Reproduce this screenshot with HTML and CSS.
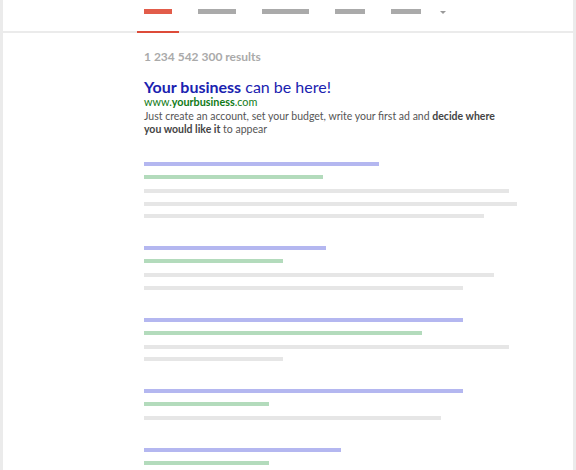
FILE: index.html
```html
<!DOCTYPE html>
<html lang="en">
<head>
  <meta charset="UTF-8" />
  <title>Search ads</title>
  <link rel="stylesheet" href="styles.css">
</head>
<body>
  <div class="frame">
    <nav class="tabs">
      <div class="tab active"><span class="tab-bar" style="width:28px"></span></div>
      <div class="tab"><span class="tab-bar" style="width:38px"></span></div>
      <div class="tab"><span class="tab-bar" style="width:47px"></span></div>
      <div class="tab"><span class="tab-bar" style="width:30px"></span></div>
      <div class="tab"><span class="tab-bar" style="width:30px"></span></div>
      <div class="tab more"><span class="caret"></span></div>
    </nav>

    <main class="results">
      <p class="count">1 234 542 300 results</p>

      <div class="ad">
        <h2><b>Your business</b> can be here!</h2>
        <div class="url">www.<b>yourbusiness</b>.com</div>
        <p class="desc">Just create an account, set your budget, write your first ad and <b>decide where you would like it</b> to appear</p>
      </div>

      <div class="result">
        <div class="bar title" style="width:235px"></div>
        <div class="bar link" style="width:179px"></div>
        <div class="bar text" style="width:365px"></div>
        <div class="bar text" style="width:373px"></div>
        <div class="bar text" style="width:340px"></div>
      </div>
      <div class="result">
        <div class="bar title" style="width:182px"></div>
        <div class="bar link" style="width:139px"></div>
        <div class="bar text" style="width:350px"></div>
        <div class="bar text" style="width:319px"></div>
      </div>
      <div class="result">
        <div class="bar title" style="width:319px"></div>
        <div class="bar link" style="width:278px"></div>
        <div class="bar text" style="width:365px"></div>
        <div class="bar text" style="width:139px"></div>
      </div>
      <div class="result">
        <div class="bar title" style="width:319px"></div>
        <div class="bar link" style="width:125px"></div>
        <div class="bar text" style="width:297px"></div>
      </div>
      <div class="result">
        <div class="bar title" style="width:197px"></div>
        <div class="bar link" style="width:125px"></div>
      </div>
    </main>
  </div>
</body>
</html>
```

FILE: styles.css
```css
:root {
  --line: #ebebeb;
  --red: #dd4b39;
  --muted: #aaa;
  --ad-blue: #1a22b0;
  --ad-green: #0f7a16;
}
* { box-sizing: border-box; margin: 0; padding: 0; }
body {
  font-family: Lato, 'Open Sans', sans-serif;
  background: #fff;
  color: #555;
  overflow: hidden;
}
.frame {
  height: 470px;
  border-left: 3px solid var(--line);
  border-right: 3px solid var(--line);
  overflow: hidden;
}

/* top tabs */
.tabs {
  display: flex;
  gap: 12px;
  height: 33px;
  padding-left: 134px;
  border-bottom: 2px solid var(--line);
}
.tab {
  padding: 9px 7px 0;
  height: 33px;
  border-bottom: 2px solid transparent;
}
.tab.active {
  border-bottom-color: var(--red);
}
.tab-bar {
  display: block;
  height: 5px;
  background: var(--muted);
}
.tab.active .tab-bar {
  background: #e25c4a;
}
.tab.more {
  padding-top: 11px;
  padding-left: 0;
}
.caret {
  display: block;
  width: 0;
  height: 0;
  border-left: 3px solid transparent;
  border-right: 3px solid transparent;
  border-top: 3px solid #999;
}

/* results */
.results {
  padding: 16px 0 0 141px;
}
.count {
  font-size: 12px;
  line-height: 15px;
  font-weight: 700;
  color: var(--muted);
}
.ad {
  margin-top: 14px;
}
.ad h2 {
  font-size: 16px;
  line-height: 17px;
  font-weight: 400;
  color: var(--ad-blue);
}
.ad h2 b {
  font-weight: 700;
}
.url {
  font-size: 10.8px;
  line-height: 13px;
  color: var(--ad-green);
}
.desc {
  margin-top: 2px;
  width: 360px;
  font-size: 10.5px;
  line-height: 13px;
  color: #555;
}
.desc b {
  color: #444;
}

.result {
  margin-top: 26px;
}
.result + .result {
  margin-top: 28px;
}
.bar {
  height: 4px;
}
.bar.title { background: #b4b7f0; }
.bar.link {
  margin-top: 9px;
  background: #b3dbbc;
}
.bar.text {
  margin-top: 8.5px;
  background: #e6e6e6;
}
.bar.link + .bar.text {
  margin-top: 10px;
}
```
